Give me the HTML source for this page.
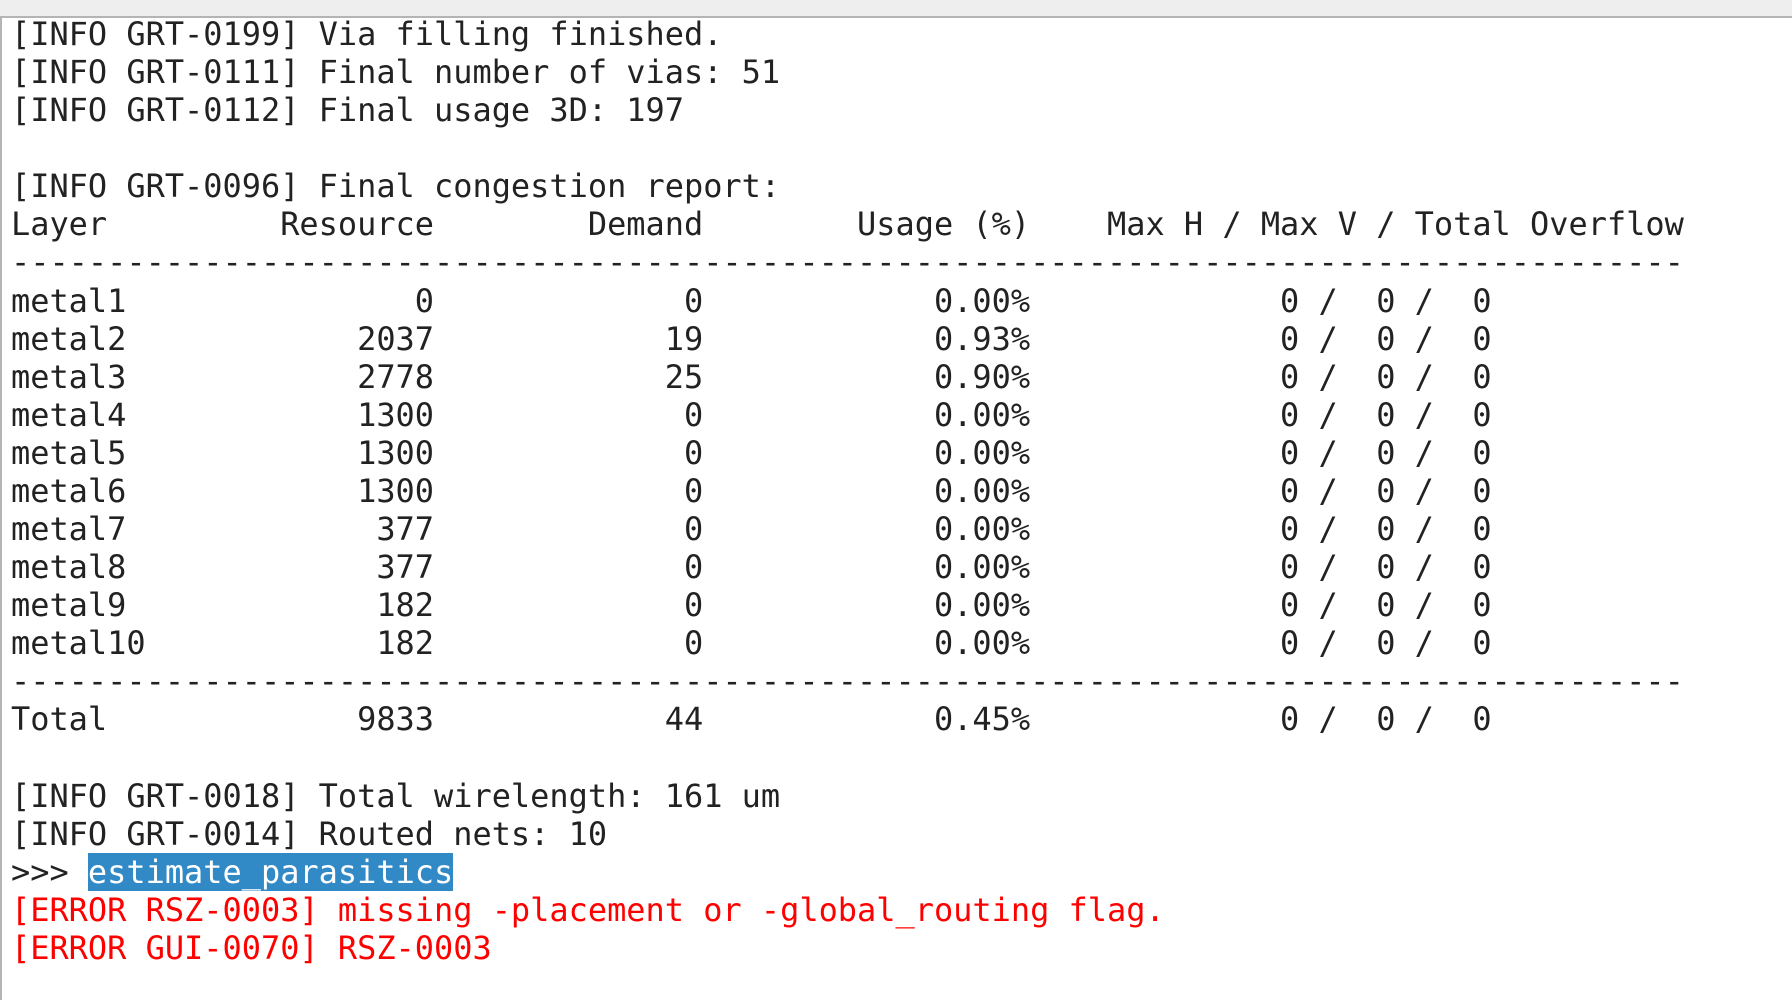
<!DOCTYPE html>
<html><head><meta charset="utf-8"><style>
html,body{margin:0;padding:0;width:1792px;height:1000px;overflow:hidden;background:#fff}
.bar{position:absolute;left:0;top:0;width:1792px;height:16px;background:#eeeeee;border-bottom:2px solid #b4b4b4}
.lb{position:absolute;left:0;top:18px;width:2px;height:982px;background:#b4b4b4}
pre{position:absolute;left:11px;top:15px;margin:0;font-family:"DejaVu Sans Mono","Liberation Mono",monospace;font-size:31.95px;line-height:38.08px;color:#222}
.r{color:#f00}
.h{background:#3189c6;color:#fff}
</style></head><body>
<div class="bar"></div><div class="lb"></div>
<pre>[INFO GRT-0199] Via filling finished.
[INFO GRT-0111] Final number of vias: 51
[INFO GRT-0112] Final usage 3D: 197

[INFO GRT-0096] Final congestion report:
Layer         Resource        Demand        Usage (%)    Max H / Max V / Total Overflow
---------------------------------------------------------------------------------------
metal1               0             0            0.00%             0 /  0 /  0
metal2            2037            19            0.93%             0 /  0 /  0
metal3            2778            25            0.90%             0 /  0 /  0
metal4            1300             0            0.00%             0 /  0 /  0
metal5            1300             0            0.00%             0 /  0 /  0
metal6            1300             0            0.00%             0 /  0 /  0
metal7             377             0            0.00%             0 /  0 /  0
metal8             377             0            0.00%             0 /  0 /  0
metal9             182             0            0.00%             0 /  0 /  0
metal10            182             0            0.00%             0 /  0 /  0
---------------------------------------------------------------------------------------
Total             9833            44            0.45%             0 /  0 /  0

[INFO GRT-0018] Total wirelength: 161 um
[INFO GRT-0014] Routed nets: 10
&gt;&gt;&gt; <span class="h">estimate_parasitics</span>
<span class="r">[ERROR RSZ-0003] missing -placement or -global_routing flag.</span>
<span class="r">[ERROR GUI-0070] RSZ-0003</span></pre>
</body></html>
